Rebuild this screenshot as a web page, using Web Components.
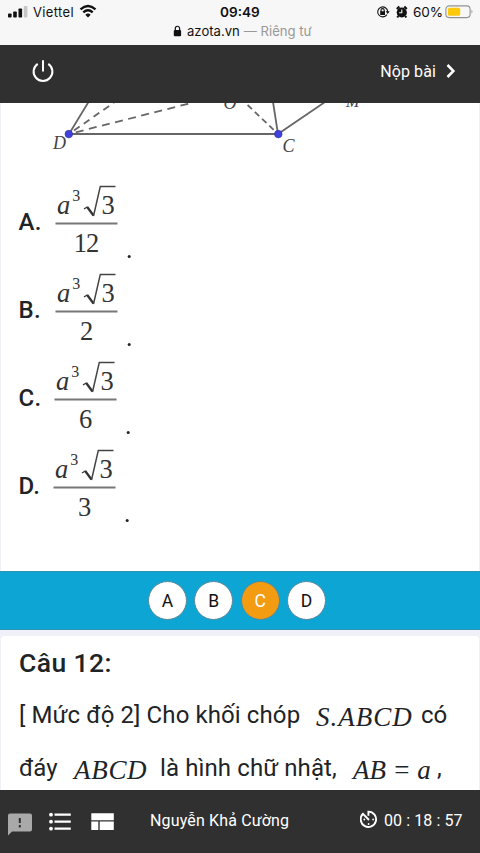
<!DOCTYPE html>
<html lang="vi">
<head>
<meta charset="utf-8">
<title>Azota</title>
<style>
html,body{margin:0;padding:0}
body{width:480px;height:853px;overflow:hidden;background:#f0f0f8;font-family:Roboto,"Noto Sans",sans-serif;color:#212427}
</style>
</head>
<body>
<exam-app></exam-app>
<script>
const define = (name, html) => customElements.define(name, class extends HTMLElement {
  constructor() {
    super();
    const root = this.attachShadow({ mode: "open" });
    const t = document.createElement("template");
    t.innerHTML = typeof html === "function" ? html(this) : html;
    root.append(t.content.cloneNode(true));
  }
});

define("status-bar", `
<style>
:host{display:flex;flex-direction:column;height:45px;background:#f7f7f7;color:#111;font-family:Inter,sans-serif}
.top{display:grid;grid-template-columns:8px 25px 46px 141px 156px 37px 32px 1fr;height:24px;align-items:center;font-size:13px;line-height:24px;white-space:nowrap}
.top svg{display:block}
b{font-size:13.6px;font-weight:600}
.url{display:grid;grid-template-columns:173px 14px auto 1fr;font-size:13.1px;line-height:15px;white-space:nowrap}
.url i{font-style:normal;color:#999;margin-left:4px}
</style>
<div class="top">
<span></span>
<svg width="25" height="24"><g fill="#111"><rect x="0" y="13.5" width="3.6" height="4" rx=".8"/><rect x="5.2" y="11.5" width="3.6" height="6" rx=".8"/><rect x="10.5" y="8.5" width="3.6" height="9" rx=".8"/></g><rect x="15.8" y="6" width="3.6" height="11.5" rx=".8" fill="#c6c6c6"/></svg>
<span style="letter-spacing:.35px">Viettel</span>
<svg width="20" height="24" viewBox="0 0 20 24"><g fill="none" stroke="#111" stroke-width="2.4"><path d="M1.5 9.3Q9 2.8 16.5 9.3"/><path d="M4.3 12.4Q9 8.3 13.7 12.4"/></g><path d="M6.3 14.7Q9 12.5 11.7 14.7L9 17.5Z" fill="#111"/></svg>
<b>09:49</b>
<svg width="36" height="24" viewBox="0 0 36 24"><g fill="none" stroke="#111" stroke-width="1.1"><path d="M10.9 14.6A5 5 0 1 1 11.7 11.6"/><path d="M5 12V10.2a1.6 1.6 0 0 1 3.2 0V12"/></g><path d="M9.7 11.3h4l-2 2.7zM4.2 11.3h4.8v3.8H4.2z" fill="#111"/><circle cx="25.8" cy="12.5" r="5.1" fill="#111"/><path d="M20.8 9l2.5-2.5M30.8 9l-2.5-2.5M22.3 16l-1 1.5M29.3 16l1 1.5" stroke="#111" stroke-width="2"/><path d="M25.8 9.4v3.4h-2.7" fill="none" stroke="#f7f7f7" stroke-width="1.1"/></svg>
<span style="font-size:13.6px;letter-spacing:-.1px">60%</span>
<svg width="30" height="24" viewBox="0 0 30 24"><rect x=".9" y="5.9" width="24.2" height="11.7" rx="3.3" fill="none" stroke="#929292" stroke-width="1.1"/><rect x="2.9" y="7.8" width="12.3" height="8" rx="1.5" fill="#fdc90c"/><path d="M26.5 9.7q2 1.8 0 3.8z" fill="#929292"/></svg>
</div>
<div class="url"><span></span><svg width="13" height="15"><rect x=".8" y="6" width="7.3" height="6.3" rx="1" fill="#111"/><path d="M2.3 6V4.4a2.15 2.15 0 0 1 4.3 0V6" fill="none" stroke="#111" stroke-width="1.2"/></svg><span>azota.vn</span><i>— Riêng tư</i></div>`);

define("exam-header", `
<style>
:host{display:flex;box-sizing:border-box;height:58px;padding:0 24px 6px 31px;background:#313031;color:#fff;align-items:center;font-size:16px}
svg{display:block}.r{margin-left:auto;letter-spacing:.1px}
.chev{margin-left:10px}
</style>
<svg width="24" height="24" viewBox="0 0 24 24" fill="none" stroke="#fff" stroke-width="2"><path d="M6.7 4.8A9.4 9.4 0 1 0 17.3 4.8M12 1.3V12.5"/></svg>
<span class="r">Nộp bài</span>
<svg class="chev" width="10" height="14" viewBox="0 0 10 14" fill="none" stroke="#fff" stroke-width="2.5"><path d="M1.5 1L7.4 7L1.5 13"/></svg>`);

define("pyramid-figure", `
<style>:host{display:block;height:76px}svg{display:block}text{font:italic 18px "Liberation Serif",serif;fill:#444}</style>
<svg width="478" height="76" viewBox="1 103 478 76">
<g stroke="#666" stroke-width="1.8" fill="none"><path d="M69 134H278M69 134L88.5 102M278 134L273 102M278 134L325 102"/>
<path d="M69 134L114 102.5" stroke-dasharray="7 5" stroke-dashoffset="-6"/><path d="M69 134L192 102.8" stroke-dasharray="8 5.5" stroke-dashoffset="-7"/><path d="M278 134L246 103.5" stroke-dasharray="6 4" stroke-dashoffset="-6"/></g>
<circle cx="68.8" cy="134.1" r="3.8" fill="#4141dd" stroke="#303098" stroke-width=".6"/><circle cx="278.3" cy="134.1" r="3.8" fill="#4141dd" stroke="#303098" stroke-width=".6"/>
<text x="53" y="149">D</text><text x="282.5" y="151.5">C</text><text x="223.5" y="108.5">O</text><text x="346" y="106.8" style="font-size:16px">M</text>
</svg>`);

define("answer-option", el => `
<style>
:host{display:grid;grid-template-columns:17.5px 120px 1fr;height:88px}
.l{grid-column:2;display:flex}
b{font-weight:500;font-size:24px;line-height:24px;padding-top:31px;width:34px;letter-spacing:.3px}
svg{display:block;margin-left:${el.getAttribute("shift")}px;flex:none}
text{font:26.5px "Liberation Serif",serif;fill:#333}
</style>
<div class="l"><b>${el.getAttribute("label")}.</b>
<svg width="84" height="88" viewBox="52.5 0 84 88">
<text x="56.5" y="34.5" style="font-style:italic">a</text><text x="71.7" y="21.5" style="font-size:16px">3</text><text x="101" y="34.5" >3</text>
<path d="M83.5 30L87 27.8" stroke="#333" stroke-width="1.2" fill="none"/><path d="M86.7 28L93 36.5" stroke="#333" stroke-width="2.3" fill="none"/><path d="M93 37L99.8 7.4H115" stroke="#444" stroke-width="1.5" fill="none"/>
<path d="M55 44.5H117" stroke="#777" stroke-width="1.9"/>
<text x="86" y="73" text-anchor="middle" textLength="${el.getAttribute("den").length * 12.8}">${el.getAttribute("den")}</text>
<circle cx="128.7" cy="77.5" r="1.5" fill="#222"/>
</svg></div>`);

define("choice-bar", `
<style>
:host{display:flex;height:59px;background:#0da5d3;box-sizing:border-box;border-top:1px solid #2e94b5;border-bottom:1px solid #2e94b5;justify-content:center;align-items:center;gap:7.4px;padding-right:6px}
span{box-sizing:border-box;width:39px;height:39px;border-radius:50%;background:#fff;border:1px solid #55889c;color:#111;display:grid;place-items:center;font-size:17.5px;line-height:38px}
.on{background:#f39c12;color:#fff}
</style>
<span>A</span><span>B</span><span class="on">C</span><span>D</span>`);

define("next-question", `
<style>
:host{display:block;box-sizing:border-box;height:154px;margin:6px 1px 0;background:#fff;border-radius:4px 4px 0 0;padding:9px 0 0 18px;overflow:hidden}
h2{margin:0;font-size:26.5px;font-weight:500;line-height:36px;letter-spacing:.4px}
p{margin:0;display:grid;font-size:24px;line-height:53px;height:53px;white-space:nowrap}
.one{grid-template-columns:297px 105px 1fr;margin-top:8px}
.two{grid-template-columns:55px 86px 193px 84px 1fr}
i{font-family:"Liberation Serif",serif;font-size:27px;position:relative;top:2px}
.a{letter-spacing:.1px}.b{letter-spacing:1px}.v{letter-spacing:.7px}.c{letter-spacing:.1px}.d{letter-spacing:-.1px}
</style>
<h2>Câu 12:</h2>
<p class="one"><span class="a">[ Mức độ 2] Cho khối chóp</span><i class="b">S.ABCD</i><span>có</span></p>
<p class="two"><span>đáy</span><i class="v">ABCD</i><span class="c">là hình chữ nhật,</span><i class="d">AB = a</i><span>,</span></p>`);

define("exam-footer", `
<style>
:host{display:grid;grid-template-columns:8px 41px 42px 51px 1fr 24px 96px;height:63px;background:#313031;color:#fff;font-size:16px;line-height:62px;white-space:nowrap}
svg{display:block}
.name{padding-left:8px;letter-spacing:.15px}
.time{letter-spacing:.08px}
</style>
<span></span>
<svg width="25" height="63"><path d="M2 23.5H22a2 2 0 0 1 2 2V39.5a2 2 0 0 1-2 2H4L0 45.5V25.5a2 2 0 0 1 2-2z" fill="#a9a9a9"/><path d="M11.8 28v5M11.8 35v2.5" stroke="#313031" stroke-width="2"/></svg>
<svg width="24" height="63"><g fill="#fff"><circle cx="2" cy="24.7" r="1.9"/><circle cx="2" cy="31.7" r="1.9"/><circle cx="2" cy="38.7" r="1.9"/><path d="M5.5 23.6h16.3v2.2H5.5zM5.5 30.6h16.3v2.2H5.5zM5.5 37.6h16.3v2.2H5.5z"/></g></svg>
<svg width="24" height="63"><path d="M.3 23.3h22.5v7H.3zM.3 31.5h7v8.4h-7zM8.7 31.5h14.1v8.4H8.7z" fill="#fff"/></svg>
<span class="name">Nguyễn Khả Cường</span>
<svg width="22" height="63" viewBox="0 0 22 63" fill="none" stroke="#fff" stroke-width="1.9"><path d="M8.4 25.8V21.6A7.7 7.7 0 1 1 3 23.8L9 30"/><g fill="#fff" stroke="none"><circle cx="4.3" cy="29.5" r=".9"/><circle cx="13.1" cy="29.5" r=".9"/><circle cx="8.6" cy="34" r=".9"/></g></svg>
<span class="time">00 : 18 : 57</span>`);

define("exam-app", `
<style>
:host{display:flex;flex-direction:column;width:480px;height:853px;overflow:hidden}
main{height:468px;margin:0 1px;background:#fff;box-sizing:border-box}
</style>
<status-bar></status-bar>
<exam-header></exam-header>
<main>
<pyramid-figure></pyramid-figure>
<answer-option label="A" den="12" shift="0"></answer-option>
<answer-option label="B" den="2" shift="0"></answer-option>
<answer-option label="C" den="6" shift="-.5"></answer-option>
<answer-option label="D" den="3" shift="-2"></answer-option>
</main>
<choice-bar></choice-bar>
<next-question></next-question>
<exam-footer></exam-footer>`);
</script>
</body>
</html>
